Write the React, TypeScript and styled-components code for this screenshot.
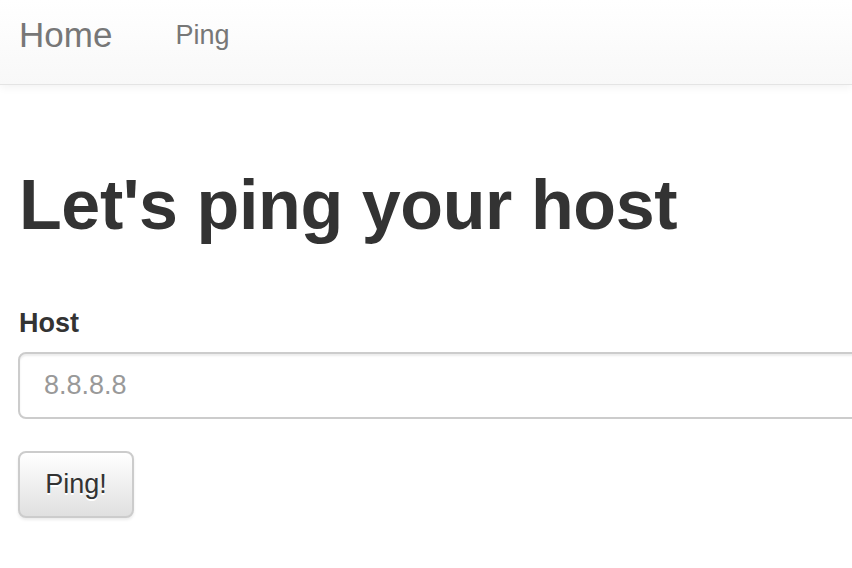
import React from "react";
import styled, { createGlobalStyle } from "styled-components";

const Global = createGlobalStyle`
  html, body { margin: 0; padding: 0; background: #fff; overflow: hidden; }
  body { font-family: "Liberation Sans", Arial, sans-serif; color: #333; }
`;

const Navbar = styled.nav`
  height: 84px;
  border-bottom: 1px solid #e4e4e4;
  background-image: linear-gradient(to bottom, #fff 0, #f8f8f8 100%);
  box-shadow: 0 2px 9px rgba(0, 0, 0, 0.06);
  display: flex;
  align-items: center;
  padding-left: 19px;
  gap: 63px;
`;

const Brand = styled.a`
  font-size: 35px;
  color: #777;
  text-decoration: none;
  line-height: 1;
  margin-top: -16px;
`;

const NavLink = styled.a`
  font-size: 27px;
  color: #777;
  text-decoration: none;
  line-height: 1;
  margin-top: -14px;
`;

const Main = styled.main`
  padding-left: 18px;
  display: flex;
  flex-direction: column;
  align-items: flex-start;
  overflow: hidden;
`;

const Title = styled.h1`
  margin: 82px 0 0 0;
  font-size: 70px;
  line-height: 77px;
  font-weight: 700;
  letter-spacing: -0.4px;
  color: #333;
  padding-left: 1px;
`;

const Label = styled.label`
  margin-top: 63px;
  font-size: 27px;
  line-height: 32px;
  font-weight: 700;
  color: #333;
  padding-left: 1px;
`;

const Input = styled.input`
  margin-top: 13px;
  box-sizing: border-box;
  width: calc(100% + 20px);
  height: 67px;
  border: 2px solid #ccc;
  border-radius: 8px;
  box-shadow: inset 0 2px 2px rgba(0, 0, 0, 0.075);
  padding: 0 24px;
  font-family: "Liberation Sans", Arial, sans-serif;
  font-size: 27px;
  color: #555;
  outline: none;
  &::placeholder { color: #999; }
`;

const Button = styled.button`
  margin: 32px 0 6px 0;
  box-sizing: border-box;
  width: 116px;
  height: 67px;
  border: 2px solid #ccc;
  border-radius: 8px;
  background-image: linear-gradient(to bottom, #fff 0, #e0e0e0 100%);
  box-shadow: 0 2px 3px rgba(0, 0, 0, 0.08);
  font-family: "Liberation Sans", Arial, sans-serif;
  font-size: 27px;
  color: #333;
  text-shadow: 0 2px 0 #fff;
  padding: 0 0 0 -2px;
`;

export default function App() {
  return (
    <>
      <Global />
      <Navbar>
        <Brand href="#">Home</Brand>
        <NavLink href="#">Ping</NavLink>
      </Navbar>
      <Main>
        <Title>Let's ping your host</Title>
        <Label htmlFor="host">Host</Label>
        <Input id="host" placeholder="8.8.8.8" />
        <Button>Ping!</Button>
      </Main>
    </>
  );
}
